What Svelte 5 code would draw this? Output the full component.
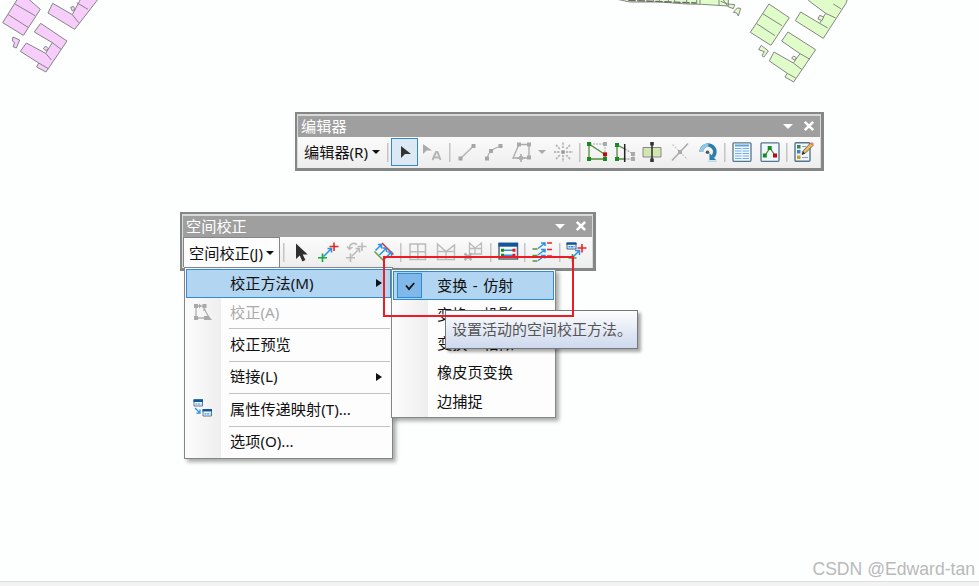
<script>
  const methods = ["变换 - 仿射", "变换 - 投影", "变换 - 相似", "橡皮页变换", "边捕捉"];
  let active = $state(0);

  const menu = [
    { label: "校正方法(M)", arrow: true, open: true },
    { label: "校正(A)", icon: "adjust", disabled: true, line: true },
    { label: "校正预览", line: true },
    { label: "链接(L)", arrow: true, line: true },
    { label: "属性传递映射(T)...", icon: "mapping", line: true },
    { label: "选项(O)..." },
  ];

  const editorTools = [
    "edit", "annotation", "|", "line", "arc", "trace", "v", "point", "|",
    "vertices", "reshape", "cut", "split", "rotate", "|", "attributes", "sketch", "|", "template",
  ];
  const adjustTools = [
    "select", "link", "modify", "multi", "|", "grid", "limit", "clear", "|",
    "table", "|", "edge", "|", "transfer",
  ];

  // pixel polygons, drawn at three times their size on the map
  const pink = [
    "66,-20 121,28 70,106 8,68 58,-12",
    "158,10 217,44 236,8 246,-10 300,-10 224,88 144,39",
    "122,70 201,123 138,216 110,201 116,189 61,154 79,129 137,160 157,128 103,96",
  ];
  const green = [
    "507,12 568,53 513,136 451,97",
    "602,36 659,70 677,40 626,2 624,-10 745,-10 738,10 670,115 586,62",
    "564,96 647,149 581,246 555,231 562,220 508,183 522,156 580,189 600,161 545,123",
  ];
</script>

{#snippet icon(name)}
  <svg class="icon" viewBox="0 0 24 24" width="24" height="24" fill="none">
    {#if name === "edit"}
      <path d="M8 6v12l4-4h6z" fill="#333" />
    {:else if name === "annotation"}
      <path d="M3 4v10l3.5-3.5H12z" fill="#aaa" />
      <path d="M12.5 20l3.5-8h1.5l3 8M14.5 17.5h5" stroke="#b5b5b5" stroke-width="2" />
    {:else if name === "line"}
      <path d="M5.5 18.5L18.5 6" stroke="#b0b0b0" stroke-width="1.3" />
      <path d="M3.5 16.5h4v4h-4zM16.5 4h4v4h-4z" fill="#a6a6a6" />
    {:else if name === "arc"}
      <path d="M5 18.5Q7 9 18 6.5" stroke="#b0b0b0" stroke-width="1.2" />
      <path d="M3 16.5h4v4H3zM7 9h4v4H7zM16.5 4h4v4h-4z" fill="#a6a6a6" />
    {:else if name === "trace"}
      <path d="M19 17V4.5H9L3 18h6M14 18h5" stroke="#aaa" stroke-width="1.3" />
      <path d="M7 2.5h4v4H7zM17 2.5h4v4h-4zM17 15.5h4v4h-4z" fill="#aaa" />
      <path d="M11 14v8M7 18h8" stroke="#aaa" stroke-width="1.5" /><circle cx="11" cy="18" r="2" stroke="#aaa" />
    {:else if name === "point"}
      <path d="M12 2.5V9M12 15v7M3 12h6M15 12h7M5 5l4 4M19 5l-4 4M5 19l4-4M19 19l-4-4" stroke="#b8b8b8" stroke-width="1.8" stroke-dasharray="2.2 1" />
      <path d="M10.3 10.3h3.5v3.5h-3.5z" fill="#999" />
    {:else if name === "vertices"}
      <path d="M5 4h15v10" stroke="#aaa" stroke-dasharray="2 1" />
      <path d="M4 4v15h16v-4.5z" stroke="#568b39" stroke-width="1.3" />
      <path d="M2 2h4v4H2zM2 17h4v4H2zM18 17h4v4h-4z" fill="#168c20" />
      <path d="M18 12.3h4v4h-4z" fill="#c00711" /><path d="M18 2h4v4h-4z" fill="#aaa" />
    {:else if name === "reshape"}
      <path d="M12 9l8 5v5h-8" stroke="#aaa" stroke-width="1.3" stroke-dasharray="2 1" />
      <path d="M12 9L4 5v14h7" stroke="#568b39" stroke-width="1.3" />
      <path d="M2 3h4v4H2zM2 17h4v4H2z" fill="#168c20" />
      <path d="M18 12h4v4h-4zM18 17h4v4h-4z" fill="#aaa" />
      <path d="M11.7 4v18" stroke="#222" stroke-width="1.5" />
    {:else if name === "cut"}
      <path d="M3 7.5h18v9.5H3z" fill="#d4e6b0" stroke="#888" />
      <path d="M12 3v18" stroke="#111" stroke-width="1.3" />
      <path d="M10.2 2h3.6v3.6h-3.6zM10.2 18.4h3.6V22h-3.6z" fill="#333" />
    {:else if name === "split"}
      <path d="M4 20.5L20 3.5" stroke="#aaa" stroke-width="1.5" />
      <path d="M4.5 4.5l15 15" stroke="#c4c4c4" stroke-width="1.1" stroke-dasharray="2 1.5" />
      <path d="M10 10h4v4h-4z" fill="#aaa" />
    {:else if name === "rotate"}
      <path d="M5.3 12a6.8 6.8 0 1 1 11.5 4.8" stroke="#2b7dae" stroke-width="3.6" />
      <path d="M5.3 12a6.8 6.8 0 0 1 7-6.8" stroke="#8fc9e4" stroke-width="3.6" />
      <path d="M13.5 20V13l6.5 7z" fill="#2b7dae" /><path d="M12 21.2h9" stroke="#a9cddd" />
      <circle cx="11.5" cy="12.3" r="1.8" fill="#555" />
    {:else if name === "attributes"}
      <rect x="3" y="2.8" width="18" height="18.5" rx="1" fill="#eef7ff" stroke="#58748d" stroke-width="1.3" />
      <path d="M5 5.5h14" stroke="#61a4d8" stroke-width="2" />
      <path d="M5 8.5h6.5M12.5 8.5H19M5 11h6.5M12.5 11H19M5 13.5h6.5M12.5 13.5H19M5 16h6.5M12.5 16H19M5 18.5h6.5M12.5 18.5H19" stroke="#75afe0" />
    {:else if name === "sketch"}
      <rect x="3" y="2.8" width="18" height="18.5" rx="1" fill="#eff7fd" stroke="#58748d" stroke-width="1.3" />
      <path d="M7 15.5L12 8l5 7.5" stroke="#568b39" stroke-width="1.3" />
      <path d="M9.7 6h4v4h-4zM4.8 13.5h4v4h-4z" fill="#168c20" /><path d="M15 13.5h4v4h-4z" fill="#c00711" />
    {:else if name === "template"}
      <rect x="3" y="2.8" width="15" height="18.5" rx="1" fill="#eef5fb" stroke="#58748d" stroke-width="1.4" />
      <path d="M5 5h3.5v3.5H5z" fill="#37865a" /><path d="M5 10h3.5v3.5H5z" fill="#4188ba" /><path d="M5 15.5h3.5V19H5z" fill="#d09b23" />
      <path d="M10 6.5h4M10 17.5h6M10 11.5h2" stroke="#8c9eaf" />
      <path d="M10 14.5l1.5-4L18.5 3l2.5 2.5-7.5 7.5z" fill="#edbd5b" stroke="#54493f" stroke-width=".8" />
      <path d="M18 3.5L20 2l2 2-1.5 2z" fill="#e67f82" /><path d="M10 14.5l1-3 2 2z" fill="#222" />
    {:else if name === "select"}
      <path d="M7 3.5v15.5l3.8-3.5 2.6 6 3-1.5-2.7-5.5h5z" fill="#2e2e2e" />
    {:else if name === "link" || name === "modify"}
      {@const off = name === "modify"}
      <path d="M7.5 16.5l8-8M11.5 8.5h4v4" stroke={off ? "#bbb" : "#2993e6"} stroke-width="1.5" />
      <path d="M18 2.5V11M13.5 6.5h9" stroke={off ? "#bbb" : "#ef2525"} stroke-width="1.6" />
      <path d="M6.5 13.5V22M2 17.7h9" stroke={off ? "#bbb" : "#19a63b"} stroke-width="1.6" />
      {#if off}<path d="M5.5 9C5 4 9 2 13 4.5M3 6.5l2.5 2.8L8.5 7" stroke="#bbb" stroke-width="1.5" />{/if}
    {:else if name === "multi"}
      <path d="M10 3l11.5 11.5" stroke="#ef2525" stroke-width="1.5" /><path d="M2.5 11.5L12 21" stroke="#6a9f43" stroke-width="1.5" />
      <path d="M3.5 10.5l6-6M7.5 15l7-7M12 19.5l7.5-7.5M5.8 4.5h3.7v4M10.5 8h4v4M15.5 12h4v4" stroke="#2993e6" stroke-width="1.5" />
    {:else if name === "grid"}
      <path d="M4 4h15.5v15.5H4zM11.8 4v15.5M4 11.8h15.5" stroke="#bbb" stroke-width="1.5" />
    {:else if name === "limit"}
      <path d="M3.5 4v15.5h17V5L12 11.5zM12 11.5v8M3.5 11.5h17" stroke="#bbb" stroke-width="1.4" />
    {:else if name === "clear"}
      <path d="M8.5 3v11h12V3L14 8zM14 8v6M8.5 8.5h12" stroke="#bbb" stroke-width="1.3" />
      <path d="M3.5 13.5l7 6.5M10.5 13.5l-7 6.5" stroke="#b0b0b0" stroke-width="2.4" />
    {:else if name === "table"}
      <path d="M3 3.5h18.5V19H3z" fill="#fafafa" stroke="#556573" stroke-width="1.5" /><path d="M2.5 2.7H22v4H2.5z" fill="#14559c" />
      <path d="M7 10.3h10M7 15.2h10" stroke="#2993e6" stroke-width="1.5" />
      <path d="M5 8.8h3v3H5zM5 13.7h3v3H5z" fill="#168c20" /><path d="M16.5 8.8h3v3h-3zM16.5 13.7h3v3h-3z" fill="#e11c20" />
    {:else if name === "edge"}
      <path d="M17 3h5M17 9.5h5M17 16h5" stroke="#ef2525" stroke-width="1.6" />
      <path d="M2.5 9h5M2.5 15.5h5M2.5 21h5" stroke="#4d9b34" stroke-width="1.6" />
      <path d="M8 8.5l6.5-5M8 15l6.5-5M8 20.5l6.5-4.5M11 3h4v3M11 9.5h4v3M11 15.5h4v3" stroke="#2993e6" stroke-width="1.5" />
    {:else if name === "transfer"}
      <path d="M3 3h9v6H3z" fill="#edf7ff" stroke="#47617b" /><path d="M2.5 2.5h10v2.3h-10z" fill="#14559c" />
      <path d="M4.5 6.8h6" stroke="#2993e6" stroke-width="1.5" stroke-dasharray="2 .5" />
      <path d="M18 4v8.5M13.5 8h9" stroke="#ef2525" stroke-width="1.6" />
      <path d="M9 17l6-6M11 10.5h4.5V15" stroke="#2993e6" stroke-width="1.5" /><path d="M8.5 14v8M4.5 18h8" stroke="#35a13b" stroke-width="1.6" />
    {:else if name === "adjust"}
      <path d="M5 6v12h8M5 6h8v5M13 8l5 10" stroke="#b0b0b0" stroke-width="1.3" />
      <path d="M3 4h4v4H3zM11.5 4h4v4h-4zM3 16h4v4H3zM13 16h4v4h-4z" fill="#a9a9a9" />
      <path d="M8 3.5L10.5 6 8 8.500zM17 15l4 5h-4z" fill="#aaa" />
    {:else if name === "mapping"}
      <path d="M3 3h8.5v6H3zM12 13h8.5v6H12z" fill="#f2faff" stroke="#57789a" />
      <path d="M2.5 2.3H12v2.6H2.5zM11.5 12H21v2.6h-9.5z" fill="#14559c" />
      <path d="M4.5 7h6M13.5 16.8h6" stroke="#2993e6" stroke-width="1.2" stroke-dasharray="2 .6" />
      <path d="M4 11l4.5 4.5M9 12.5v3.7H5.3" stroke="#2993e6" stroke-width="1.3" />
    {/if}
  </svg>
{/snippet}

{#snippet toolbar(title, label, tools, open)}
  <div class="title">
    <span>{title}</span>
    <i class="caret white"></i>
    <svg class="close" viewBox="0 0 12 12" width="12" height="12"><path d="M1.8 1.8l8.4 8.4M10.2 1.8l-8.4 8.4" stroke="#fff" stroke-width="2.6" /></svg>
  </div>
  <div class="tools">
    <button type="button" class="drop" class:opened={open}>{label}<i class="caret"></i></button>
    <span class="sep"></span>
    {#each tools as tool}
      {#if tool === "|"}
        <span class="sep"></span>
      {:else if tool === "v"}
        <span class="more"><i class="caret gray"></i></span>
      {:else}
        <button type="button" class="tool" class:checked={tool === "edit"} aria-label={tool}>{@render icon(tool)}</button>
      {/if}
    {/each}
  </div>
{/snippet}

<main>
  <svg class="map" viewBox="0 0 979 586" width="979" height="586">
    <g transform="scale(.3333)" fill="#f7cdfb" stroke="#858585" stroke-width="3">
      {#each pink as points}<polygon {points} />{/each}
      <path d="M45 12L105 47M25 44L84 82M217 44L236 68M230 8L264 28M157 128L183 148M137 160L154 180M116 189L145 206" />
      <path d="M39 111l20 9-10 24-10-4 5-12-7-5zM212 22l8-3 6 8-9 6zM130 146l7-8 8 8-7 6z" />
    </g>
    <g transform="translate(600 0) scale(.3333)" fill="#e0fcc8" stroke="#858585" stroke-width="3">
      {#each green as points}<polygon {points} />{/each}
      <path d="M488 41L546 77M470 71L525 107M659 70L683 84M677 40L707 54M700 12L724 27M600 161L630 178M580 189L606 209M562 220L587 234" />
      <path d="M484 136l21 17-13 18-6-4 7-12-17-6zM654 57l5-11 12 5-5 11zM575 175l6-7 8 5-4 8z" />
      <path d="M52-2H385V18L305 13 260 12 180 6H90z" />
      <path d="M85 1L290 9" stroke="#666" stroke-dasharray="22 5" stroke-width="4" />
      <path d="M116 0v6M133 0v6M160 0v6M178 0v8M205 0v9M224 0v10M260 0v12M290 0v12M300 0v14M357 0v17M362 4l22 8M370 0l12 17" />
      <path d="M386 12l18 2-4 12-16-6zM400 37l12-13 10 1-7 23-5-9z" />
    </g>
  </svg>

  <section class="window editor">
    {@render toolbar("编辑器", "编辑器(R)", editorTools, false)}
  </section>

  <section class="window adjustment">
    {@render toolbar("空间校正", "空间校正(J)", adjustTools, true)}
  </section>

  <div class="menu main-menu">
    {#each menu as item}
      <div class="item" class:hot={item.open} class:disabled={item.disabled} class:line={item.line}>
        <span class="gutter">{#if item.icon}{@render icon(item.icon)}{/if}</span>
        <span class="label">{item.label}</span>
        {#if item.arrow}<i class="arrow"></i>{/if}
      </div>
    {/each}
  </div>

  <div class="menu submenu">
    {#each methods as method, i}
      <button type="button" class="item" class:hot={active === i} onclick={() => (active = i)}>
        <span class="gutter">
          {#if active === i}
            <span class="check"><svg viewBox="0 0 12 12" width="12" height="12"><path d="M2 5.5l3 3.5 5.2-6" fill="none" stroke="#111" stroke-width="1.8" /></svg></span>
          {/if}
        </span>
        <span class="label">{method}</span>
      </button>
    {/each}
  </div>

  <div class="tooltip">设置活动的空间校正方法。</div>
  <div class="marker"></div>

  <footer></footer>
  <div class="watermark">CSDN @Edward-tan</div>
</main>

<style>
  :global(body) {
    margin: 0;
    overflow: hidden;
  }

  main {
    position: relative;
    width: 979px;
    height: 586px;
    overflow: hidden;
    background: #fdfefe;
    color: #111;
    font: 15.2px/20px "Noto Sans", "Noto Sans CJK SC", sans-serif;
    white-space: nowrap;
  }

  button {
    border: 0;
    padding: 0;
    background: none;
    color: inherit;
    font: inherit;
  }

  .map {
    position: absolute;
    inset: 0;
  }

  .icon {
    display: block;
    flex: none;
  }

  .window {
    position: absolute;
    box-sizing: border-box;
    height: 59px;
    border: 2px solid #858786;
    border-bottom-width: 3px;
    border-right-width: 3px;
    background: #d9d9d9;
    padding: 1px;
    padding-top: 2px;
  }

  .editor {
    left: 295px;
    top: 112px;
    width: 529px;
  }

  .adjustment {
    left: 180px;
    top: 212px;
    width: 416px;
  }

  .title {
    display: flex;
    align-items: center;
    box-sizing: border-box;
    height: 21px;
    padding: 0 5px 1px 3px;
    background: #9f9f9f;
    color: #fff;
  }

  .title span {
    flex: 1;
    padding-bottom: 1px;
  }

  .close {
    margin-left: 10px;
  }

  .caret {
    display: inline-block;
    flex: none;
    border: 4px solid transparent;
    border-top: 4px solid #111;
    border-bottom: 0;
  }

  .caret.white {
    border-width: 5px 5px 0;
    border-top-color: #fff;
  }

  .caret.gray {
    border-top-color: #aaa;
  }

  .tools {
    display: flex;
    align-items: center;
    box-sizing: border-box;
    height: 31px;
    padding-bottom: 1px;
    background: linear-gradient(#fbfbfb, #ededed);
  }

  .drop {
    display: flex;
    align-items: center;
    flex: none;
    box-sizing: border-box;
    width: 86px;
    height: 30px;
    padding-left: 6px;
    gap: 4px;
  }

  .drop.opened {
    width: 97px;
    padding-left: 5px;
    gap: 3px;
    border: 1px solid #858585;
    border-bottom: 0;
    background: #fdfdfd;
  }

  .sep {
    flex: none;
    width: 6.7px;
    height: 19px;
    background: linear-gradient(#c4c4c4, #c4c4c4) center / 1.5px 100% no-repeat;
  }

  .tool {
    display: flex;
    align-items: center;
    justify-content: center;
    flex: none;
    box-sizing: border-box;
    width: 27.7px;
    height: 28px;
  }

  .tool.checked {
    border: 1.5px solid #2f8ad2;
    background: #dce9f5;
  }

  .more {
    display: flex;
    justify-content: center;
    flex: none;
    width: 13px;
  }

  .menu {
    position: absolute;
    box-sizing: border-box;
    border: 1.5px solid #858585;
    background: linear-gradient(90deg, #fcfcfc, #eee) 1px 0 / 35px 100% no-repeat, #fdfdfd;
    box-shadow: 3px 3px 4px #0005;
  }

  .main-menu {
    left: 184px;
    top: 267px;
    width: 209px;
    height: 192px;
    padding: 1px;
  }

  .submenu {
    left: 391px;
    top: 269px;
    width: 165px;
    height: 149px;
    padding: 1px;
  }

  .item {
    position: relative;
    display: flex;
    align-items: center;
    box-sizing: border-box;
    width: 100%;
    height: 29px;
    border: 1px solid transparent;
    text-align: left;
  }

  .main-menu .item {
    padding-bottom: 1px;
  }

  .main-menu .item:nth-child(n + 3) {
    height: 32.5px;
    padding-bottom: 2px;
  }

  .main-menu .item:nth-child(2) {
    height: 31px;
    padding-bottom: 3px;
  }

  .item.hot {
    border-color: #2d8bd6;
    background: #b2d5f1;
  }

  .item.disabled {
    color: #aaa;
  }

  .item.line::after {
    content: "";
    position: absolute;
    left: 42px;
    right: 0;
    bottom: -1px;
    height: 1px;
    background: #c2c2c2;
  }

  .gutter {
    display: flex;
    align-items: center;
    justify-content: center;
    flex: none;
    width: 31px;
    margin-right: 12px;
  }

  .label {
    flex: 1;
    padding-bottom: 1px;
  }

  .submenu .label {
    padding-bottom: 2px;
    word-spacing: 1.5px;
  }

  .check {
    display: flex;
    align-items: center;
    justify-content: center;
    box-sizing: border-box;
    width: 25px;
    height: 25px;
    border: 1px solid #2d8bd6;
    background: #80b9e9;
  }

  .arrow {
    margin-right: 8px;
    border: 4.5px solid transparent;
    border-left: 6px solid #111;
    border-right: 0;
  }

  .tooltip {
    position: absolute;
    left: 445px;
    top: 310px;
    box-sizing: border-box;
    width: 193px;
    height: 39px;
    padding: 8px 6px;
    border: 1px solid #777;
    background: linear-gradient(#fdfdfe, #cdd9ee);
    box-shadow: 3px 3px 3px #0005;
    color: #555;
    font-size: 15px;
  }

  .marker {
    position: absolute;
    left: 383px;
    top: 256px;
    box-sizing: border-box;
    width: 191px;
    height: 61px;
    border: 2px solid #ed1c24;
  }

  footer {
    position: absolute;
    left: 0;
    right: 0;
    bottom: 0;
    height: 4px;
    border-top: 1px solid #ddd;
    background: #f3f3f3;
  }

  .watermark {
    position: absolute;
    right: 4px;
    bottom: 6px;
    color: #b9b9b9;
    font: 17.6px/22px "Liberation Sans", sans-serif;
  }
</style>
